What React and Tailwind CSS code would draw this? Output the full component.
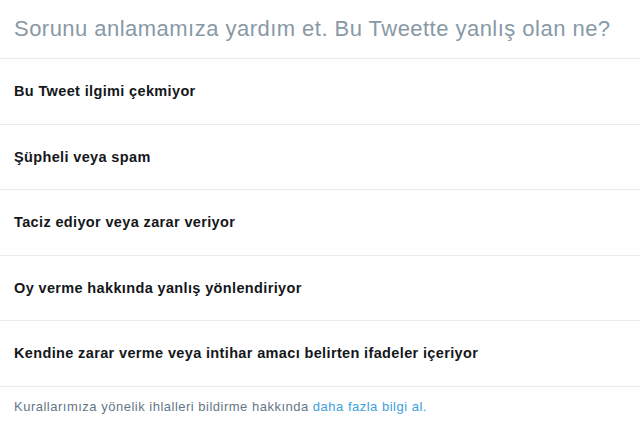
import React from "react";

const reasons = [
  "Bu Tweet ilgimi çekmiyor",
  "Şüpheli veya spam",
  "Taciz ediyor veya zarar veriyor",
  "Oy verme hakkında yanlış yönlendiriyor",
  "Kendine zarar verme veya intihar amacı belirten ifadeler içeriyor",
];

export default function App() {
  return (
    <div
      className="w-[640px] h-[436px] bg-white overflow-hidden"
      style={{ fontFamily: '"Liberation Sans", Arial, sans-serif' }}
    >
      {/* Header */}
      <div className="h-[59px] flex items-center px-[14px] border-b border-[#e6ecf0]">
        <h1 className="text-[22px] tracking-[0.47px] text-[#8899a6] leading-none">
          Sorunu anlamamıza yardım et. Bu Tweette yanlış olan ne?
        </h1>
      </div>

      {/* Options */}
      <ul>
        {reasons.map((r) => (
          <li
            key={r}
            className="h-[65.6px] flex items-center px-[14px] pt-[1px] border-b border-[#e6ecf0] text-[14.5px] tracking-[0.36px] font-bold text-[#14171a]"
          >
            {r}
          </li>
        ))}
      </ul>

      {/* Footer */}
      <p className="px-[14px] pt-[10px] text-[13px] tracking-[0.5px] text-[#657786]">
        Kurallarımıza yönelik ihlalleri bildirme hakkında{" "}
        <a className="text-[#3ea0dc]">daha fazla bilgi al.</a>
      </p>
    </div>
  );
}
